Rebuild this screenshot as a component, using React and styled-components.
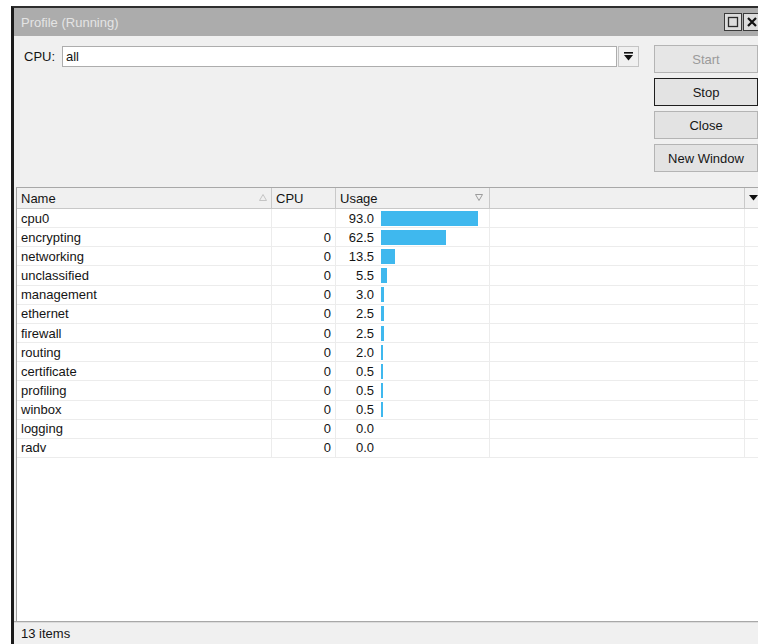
import React from "react";
import styled, { createGlobalStyle } from "styled-components";

const GlobalStyle = createGlobalStyle`
  html, body {
    margin: 0;
    padding: 0;
    background: #ffffff;
    overflow: hidden;
  }
  body {
    font-family: "Liberation Sans", Arial, sans-serif;
    font-size: 13px;
    color: #141414;
  }
`;

const Page = styled.div`
  width: 758px;
  height: 644px;
  padding: 6px 0 0 11px;
  box-sizing: border-box;
  overflow: hidden;
`;

const Window = styled.div`
  width: 750px;
  flex: none;
  height: 638px;
  box-sizing: border-box;
  border-top: 2px solid #2e2e2e;
  border-left: 3px solid #1b1b1b;
  background: #f0f0f0;
  display: flex;
  flex-direction: column;
`;

const TitleBar = styled.div`
  height: 28px;
  flex: none;
  background: #acacac;
  display: flex;
  align-items: center;
  justify-content: space-between;
  padding: 0 0 0 7px;
`;

const Title = styled.span`
  color: #e4e4e4;
  font-size: 13px;
`;

const TitleControls = styled.div`
  display: flex;
  gap: 1px;
`;

const TitleButton = styled.div`
  width: 18px;
  height: 18px;
  box-sizing: border-box;
  border: 1px solid #3a3a3a;
  background: #dcdcdc;
  display: flex;
  align-items: center;
  justify-content: center;
`;

const Toolbar = styled.div`
  height: 151px;
  flex: none;
  box-sizing: border-box;
  padding: 9px 0 0 10px;
  display: flex;
  align-items: flex-start;
`;

const FilterRow = styled.div`
  display: flex;
  align-items: center;
  margin-top: 1px;
`;

const Label = styled.span`
  width: 38px;
  font-size: 13px;
`;

const Input = styled.div`
  width: 555px;
  height: 21px;
  box-sizing: border-box;
  border: 1px solid #adadad;
  background: #ffffff;
  padding: 0 3px;
  display: flex;
  align-items: center;
  font-size: 13px;
`;

const DropButton = styled.div`
  width: 21px;
  height: 21px;
  box-sizing: border-box;
  margin-left: 1px;
  border: 1px solid #c4c4c4;
  background: #f0f0f0;
  display: flex;
  align-items: center;
  justify-content: center;
`;

const ButtonColumn = styled.div`
  margin-left: 15px;
  display: flex;
  flex-direction: column;
  gap: 5px;
`;

const Button = styled.div`
  width: 104px;
  height: 28px;
  box-sizing: border-box;
  border: 1px solid ${(p) => (p.$focused ? "#1e1e1e" : "#b4b4b4")};
  background: ${(p) => (p.$disabled ? "#e6e6e6" : "#e3e3e3")};
  color: ${(p) => (p.$disabled ? "#9a9a9a" : "#161616")};
  display: flex;
  align-items: center;
  justify-content: center;
  font-size: 13px;
`;

const TableArea = styled.div`
  flex: 1;
  margin-left: 2px;
  border-top: 1px solid #a8a8a8;
  border-left: 1px solid #a0a0a0;
  background: #ffffff;
  display: flex;
  flex-direction: column;
  overflow: hidden;
`;

const cols = "255px 64px 154px 255px 1fr";

const HeaderRow = styled.div`
  display: grid;
  grid-template-columns: ${cols};
  height: 21px;
  box-sizing: border-box;
  background: #f0f0f0;
  border-bottom: 1px solid #c8c8c8;
  flex: none;
`;

const HeaderCell = styled.div`
  position: relative;
  display: flex;
  align-items: center;
  padding-left: 4px;
  border-right: ${(p) => (p.$last ? "none" : "1px solid #c9c9c9")};
  font-size: 13px;
`;

const SortMark = styled.svg`
  position: absolute;
  right: ${(p) => p.$right}px;
  top: 6px;
`;

const Row = styled.div`
  display: grid;
  grid-template-columns: ${cols};
  height: 19.17px;
  flex: none;
  box-sizing: border-box;
  border-bottom: 1px solid #ececec;
`;

const Cell = styled.div`
  display: flex;
  align-items: center;
  justify-content: ${(p) => (p.$right ? "flex-end" : "flex-start")};
  padding: ${(p) => (p.$right ? "0 4px 0 0" : "0 0 0 4px")};
  border-right: ${(p) => (p.$last ? "none" : "1px solid #ececec")};
  font-size: 13px;
  white-space: nowrap;
`;

const UsageCell = styled.div`
  display: flex;
  align-items: center;
  border-right: 1px solid #ececec;
`;

const UsageValue = styled.span`
  width: 38px;
  text-align: right;
  flex: none;
`;

const BarTrack = styled.div`
  margin-left: 7px;
  height: 15px;
  display: flex;
  align-items: center;
`;

const Bar = styled.div`
  height: 15px;
  background: #3fb8ee;
`;

const Filler = styled.div`
  flex: 1;
`;

const StatusBar = styled.div`
  height: 23px;
  flex: none;
  box-sizing: border-box;
  border-top: 1px solid #a8a8a8;
  box-shadow: inset 0 1px 0 #dcdcdc;
  background: #f0f0f0;
  display: flex;
  align-items: center;
  padding-left: 7px;
  font-size: 13px;
`;

const rows = [
  ["cpu0", "", 93.0],
  ["encrypting", "0", 62.5],
  ["networking", "0", 13.5],
  ["unclassified", "0", 5.5],
  ["management", "0", 3.0],
  ["ethernet", "0", 2.5],
  ["firewall", "0", 2.5],
  ["routing", "0", 2.0],
  ["certificate", "0", 0.5],
  ["profiling", "0", 0.5],
  ["winbox", "0", 0.5],
  ["logging", "0", 0.0],
  ["radv", "0", 0.0],
];

const barWidth = (v) => (v > 0 ? Math.max(2, Math.round(v * 1.045)) : 0);

export default function App() {
  return (
    <>
      <GlobalStyle />
      <Page>
        <Window>
          <TitleBar>
            <Title>Profile (Running)</Title>
            <TitleControls>
              <TitleButton>
                <svg width="12" height="12" viewBox="0 0 12 12">
                  <rect x="1.5" y="1.5" width="9" height="9" fill="none" stroke="#2a2a2a" strokeWidth="1.3" />
                </svg>
              </TitleButton>
              <TitleButton>
                <svg width="12" height="12" viewBox="0 0 12 12">
                  <path d="M2 2 L10 10 M10 2 L2 10" stroke="#111" strokeWidth="2.2" />
                </svg>
              </TitleButton>
            </TitleControls>
          </TitleBar>

          <Toolbar>
            <FilterRow>
              <Label>CPU:</Label>
              <Input>all</Input>
              <DropButton>
                <svg width="9" height="9" viewBox="0 0 9 9">
                  <rect x="0" y="0" width="9" height="1.6" fill="#111" />
                  <path d="M0 3 H9 L4.5 8.5 Z" fill="#111" />
                </svg>
              </DropButton>
            </FilterRow>
            <ButtonColumn>
              <Button $disabled>Start</Button>
              <Button $focused>Stop</Button>
              <Button>Close</Button>
              <Button>New Window</Button>
            </ButtonColumn>
          </Toolbar>

          <TableArea>
            <HeaderRow>
              <HeaderCell>
                Name
                <SortMark $right={4} width="8" height="7" viewBox="0 0 8 7">
                  <path d="M0.5 6.5 L4 0.5 L7.5 6.5 Z" fill="none" stroke="#c4c4c4" strokeWidth="1" />
                </SortMark>
              </HeaderCell>
              <HeaderCell>CPU</HeaderCell>
              <HeaderCell>
                Usage
                <SortMark $right={6} width="8" height="7" viewBox="0 0 8 7">
                  <path d="M0.5 0.5 L7.5 0.5 L4 6.5 Z" fill="none" stroke="#9c9c9c" strokeWidth="1" />
                </SortMark>
              </HeaderCell>
              <HeaderCell />
              <HeaderCell $last>
                <svg width="9" height="6" viewBox="0 0 9 6">
                  <path d="M0 0 H9 L4.5 5.5 Z" fill="#111" />
                </svg>
              </HeaderCell>
            </HeaderRow>

            {rows.map(([name, cpu, usage]) => (
              <Row key={name}>
                <Cell>{name}</Cell>
                <Cell $right>{cpu}</Cell>
                <UsageCell>
                  <UsageValue>{usage.toFixed(1)}</UsageValue>
                  <BarTrack>
                    {usage > 0 && <Bar style={{ width: barWidth(usage) }} />}
                  </BarTrack>
                </UsageCell>
                <Cell />
                <Cell $last />
              </Row>
            ))}
            <Filler />
          </TableArea>

          <StatusBar>13 items</StatusBar>
        </Window>
      </Page>
    </>
  );
}
